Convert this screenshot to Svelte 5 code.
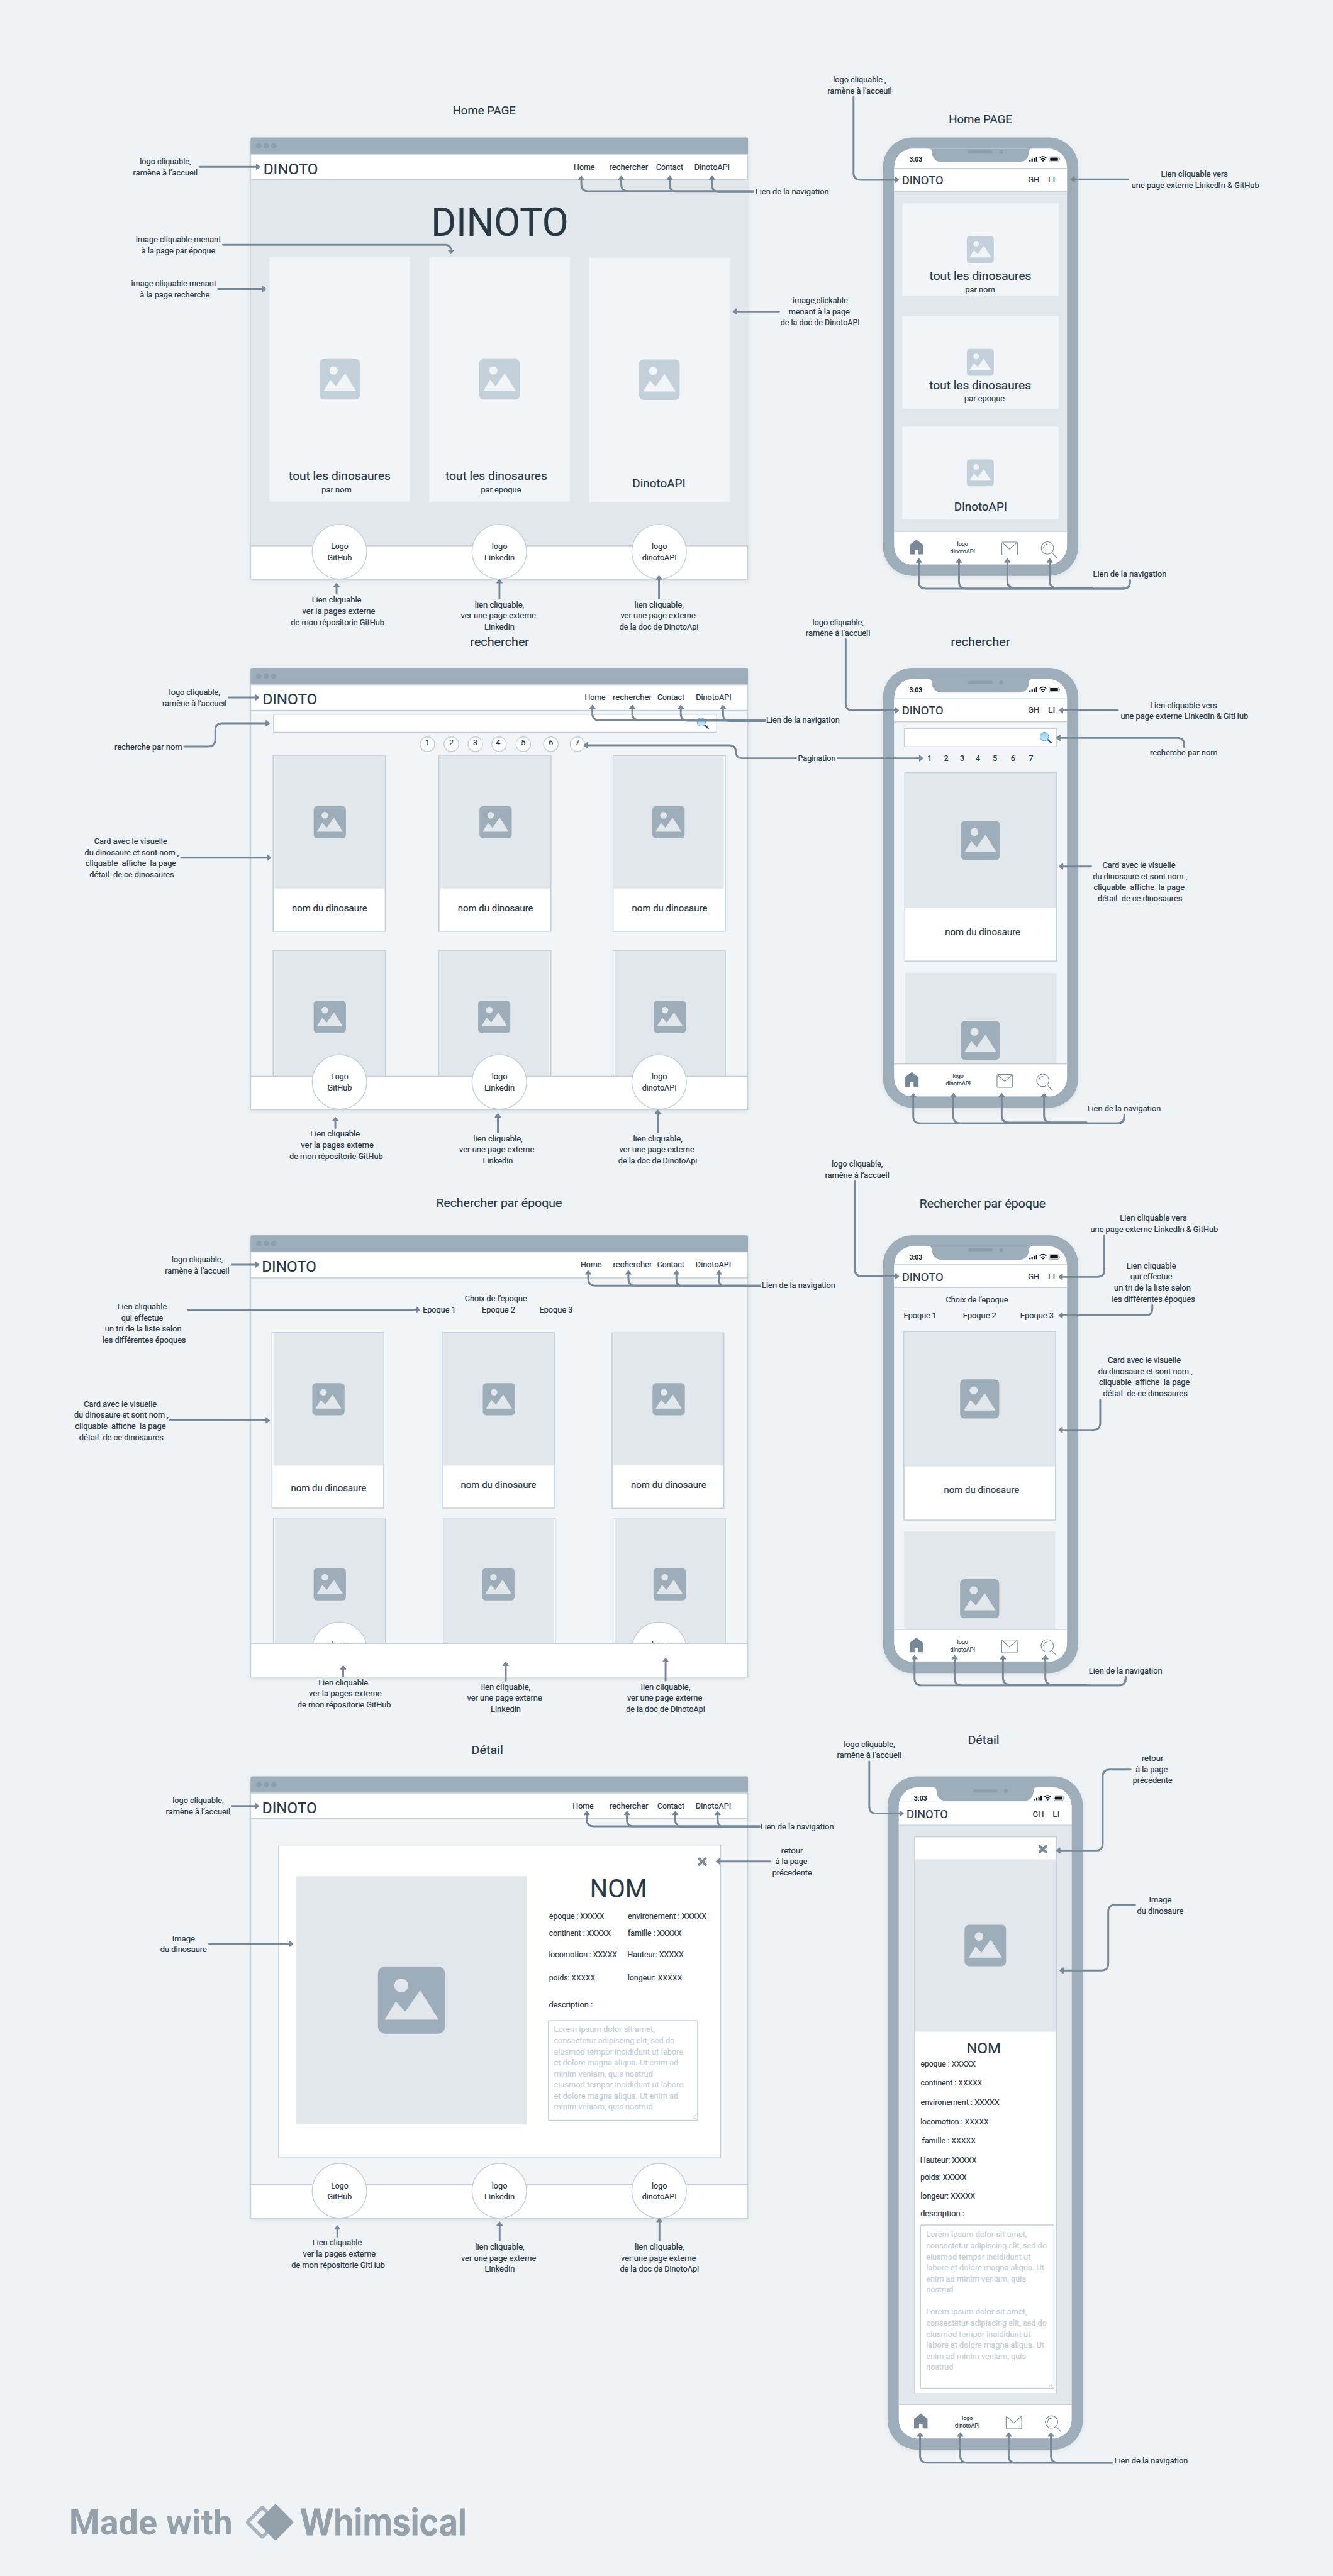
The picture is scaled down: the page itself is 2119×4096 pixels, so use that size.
<script>
  const NB = '\u00a0';

  // Known advance widths of the labels used on the board, in board units.
  const W = {
    'logo cliquable,': 111, 'logo cliquable ,': 115.5, "ramène à l’accueil": 140, "ramène à l’acceuil": 139.5,
    'image cliquable menant': 185, 'à la page par époque': 160.5, 'à la page recherche': 151.5,
    'image,clickable': 120, 'menant à la page': 132.5, 'de la doc de DinotoAPI': 172,
    'Lien cliquable vers': 145.5, 'une page externe LinkedIn & GitHub': 277,
    'Lien cliquable': 107.5, 'ver la pages externe': 158, 'de mon répositorie GitHub': 203,
    'lien cliquable,': 107, 'ver une page externe': 163, 'Linkedin': 65.5, 'de la doc de DinotoApi': 171.5,
    'Lien de la navigation': 159.5, 'recherche par nom': 147, 'Pagination': 82,
    'Card avec le visuelle': 158.5, 'du dinosaure et sont nom ,': 204.7,
    'qui effectue': 90.7, 'un tri de la liste selon': 166.5, 'les différentes époques': 181,
    'Home': 45.5, 'rechercher': 84.5, 'Contact': 58.5, 'DinotoAPI': 77, 'Logo': 37.5, 'logo': 33.5,
    'GitHub': 53, 'dinotoAPI': 75, 'Choix de l’epoque': 135, 'Epoque 1': 71.5, 'Epoque 2': 72.5, 'Epoque 3': 72.5,
    'par nom': 65, 'par epoque': 87.5, 'GH': 24.5, 'LI': 15.5, 'Image': 49, 'du dinosaure': 101,
    'retour': 47.5, 'à la page': 69.7, 'précedente': 86,
    'epoque : XXXXX': 119.5, 'continent : XXXXX': 134, 'environement : XXXXX': 171, 'locomotion : XXXXX': 148.3,
    'famille : XXXXX': 116.7, 'Hauteur: XXXXX': 122.5, 'poids: XXXXX': 100.3, 'longeur: XXXXX': 118.6, 'description :': 95,
    'Lorem ipsum dolor sit amet,': 219, 'consectetur adipiscing elit, sed do': 262,
    'eiusmod tempor incididunt ut labore': 281, 'et dolore magna aliqua. Ut enim ad': 270,
    'minim veniam, quis nostrud': 215, 'eiusmod tempor incididunt ut': 226.7,
    'labore et dolore magna aliqua. Ut': 256.6, 'enim ad minim veniam, quis': 217, 'nostrud': 59
  };
  const line3 = `cliquable${NB} affiche${NB} la page`;
  const line4 = `détail${NB} de ce dinosaures`;
  W[line3] = 197.3;
  W[line4] = 183.3;

  // Centred notes: x is the centre, y the first baseline, lines 24 apart.
  const card = ['Card avec le visuelle', 'du dinosaure et sont nom ,', line3, line4];
  const cardShift = [-2.3, 0, -2, 0];
  const tri = ['Lien cliquable', 'qui effectue', 'un tri de la liste selon', 'les différentes époques'];
  const triShift = [-4.5, -4.5, -2, 0];
  const logo = ['logo cliquable,', 'ramène à l’accueil'];
  const ext = ['Lien cliquable vers', 'une page externe LinkedIn & GitHub'];
  const gh = ['Lien cliquable', 'ver la pages externe', 'de mon répositorie GitHub'];
  const ghShift = [0, 4.7, 2.2];
  const li = ['lien cliquable,', 'ver une page externe', 'Linkedin'];
  const liShift = [0, -2.5, 0];
  const api = ['lien cliquable,', 'ver une page externe', 'de la doc de DinotoApi'];
  const apiShift = [0, -2, 0];

  const notes = [
    { x: 359, y: 356, l: logo },
    { x: 387.3, y: 525.5, l: ['image cliquable menant', 'à la page par époque'] },
    { x: 377.3, y: 621, l: ['image cliquable menant', 'à la page recherche'], s: [0, 2] },
    { x: 1780.6, y: 658, l: ['image,clickable', 'menant à la page', 'de la doc de DinotoAPI'], s: [0, -2, 0] },
    { x: 1866.3, y: 178.4, l: ['logo cliquable ,', 'ramène à l’acceuil'] },
    { x: 2595.2, y: 383.4, l: ext, s: [-2, 0] },
    { x: 730.7, y: 1308.4, l: gh, s: ghShift },
    { x: 1084.3, y: 1318.5, l: li, s: liShift },
    { x: 1430.7, y: 1318.5, l: api, s: apiShift },
    { x: 2452.8, y: 1252, l: ['Lien de la navigation'] },
    { x: 1819.3, y: 1356.4, l: logo },
    { x: 422.3, y: 1508.6, l: logo },
    { x: 322, y: 1627, l: ['recherche par nom'] },
    { x: 1773.3, y: 1652, l: ['Pagination'] },
    { x: 286, y: 1832.6, l: card, s: cardShift },
    { x: 2571.5, y: 1537, l: ext, s: [-2, 0] },
    { x: 2570, y: 1640, l: ['recherche par nom'] },
    { x: 2475, y: 1884.5, l: card, s: cardShift },
    { x: 727.5, y: 2468, l: gh, s: ghShift },
    { x: 1081, y: 2478, l: li, s: liShift },
    { x: 1428, y: 2478, l: api, s: apiShift },
    { x: 2440.5, y: 2413, l: ['Lien de la navigation'] },
    { x: 428, y: 2740.5, l: logo },
    { x: 313, y: 2843, l: tri, s: triShift },
    { x: 263.4, y: 3054.4, l: card, s: cardShift },
    { x: 745, y: 3659.5, l: gh, s: ghShift },
    { x: 1098, y: 3668.6, l: li, s: liShift },
    { x: 1445, y: 3668.6, l: api, s: apiShift },
    { x: 1861, y: 2533.6, l: logo },
    { x: 2506, y: 2650.8, l: ext, s: [-2, 0] },
    { x: 2504, y: 2754, l: tri, s: triShift },
    { x: 2486.5, y: 2959, l: card, s: cardShift },
    { x: 2443.6, y: 3634, l: ['Lien de la navigation'] },
    { x: 430, y: 3915.2, l: logo },
    { x: 398.5, y: 4215.2, l: ['Image', 'du dinosaure'] },
    { x: 1719.7, y: 4024, l: ['retour', 'à la page', 'précedente'], s: [0, -1.5, 0] },
    { x: 732, y: 4875.8, l: gh, s: ghShift },
    { x: 1085, y: 4885, l: li, s: liShift },
    { x: 1431.6, y: 4885, l: api, s: apiShift },
    { x: 1887.2, y: 3793.2, l: logo },
    { x: 2502.2, y: 3823.7, l: ['retour', 'à la page', 'précedente'], s: [0, -2, 0] },
    { x: 2519, y: 4131, l: ['Image', 'du dinosaure'] },
    { x: 2499.3, y: 5349, l: ['Lien de la navigation'] }
  ];

  // Connectors: each polyline ends in an arrow head.
  const arrows = [
    [[433, 361.8], [565, 361.8]],
    [[484, 531], [979, 531], [979, 551]],
    [[473.5, 627], [578, 627]],
    [[1691, 676], [1591, 676]],
    [[1853, 210], [1853, 390], [1952, 390]],
    [[2448.5, 389], [2324, 389]],
    [[730.7, 1288.5], [730.7, 1265]],
    [[1084.3, 1298.6], [1084.3, 1257]],
    [[1430.7, 1298.6], [1430.7, 1249]],
    [[1836, 1387], [1836, 1542], [1952, 1542]],
    [[496, 1514], [563, 1514]],
    [[400, 1620.6], [467.4, 1620.6], [467.4, 1570], [586, 1570]],
    [[1728.6, 1646], [1597.5, 1646], [1597.5, 1617.8], [1266.5, 1617.8]],
    [[1818, 1646], [2004.5, 1646]],
    [[393, 1862], [589, 1862]],
    [[2427, 1542], [2299, 1542]],
    [[2571, 1622], [2571, 1602], [2293, 1602]],
    [[2369, 1881], [2299, 1881]],
    [[728, 2449], [728, 2425]],
    [[1081, 2458], [1081, 2417]],
    [[1428, 2458], [1428, 2409]],
    [[503, 2746], [563, 2746]],
    [[408, 2843.7], [912, 2843.7]],
    [[369, 3084], [586, 3084]],
    [[745, 3640], [745, 3616]],
    [[1098, 3649], [1098, 3608]],
    [[1445, 3649], [1445, 3599.7]],
    [[1856, 2565], [1856, 2771], [1952, 2771]],
    [[2397.6, 2682], [2397.6, 2772.4], [2298, 2772.4]],
    [[2501.8, 2834], [2501.8, 2855.9], [2298, 2855.9]],
    [[2388.6, 3039], [2388.6, 3104.6], [2298, 3104.6]],
    [[504, 3921.5], [563, 3921.5]],
    [[454, 4220.7], [636.7, 4220.7]],
    [[1672.8, 4041.6], [1554, 4041.6]],
    [[732.4, 4856.4], [732.4, 4832]],
    [[1084.8, 4865], [1084.8, 4823.8]],
    [[1431.7, 4865], [1431.7, 4816]],
    [[1887.2, 3824.7], [1887.2, 3937.5], [1962, 3937.5]],
    [[2454.6, 3842.3], [2394, 3842.3], [2394, 4018], [2293, 4018]],
    [[2464.3, 4136.4], [2406, 4136.4], [2406, 4278.6], [2300, 4278.6]]
  ];

  // The four links of each browser menu join on one line that runs to the note.
  const menus = [
    { xs: [1262, 1348.8, 1454, 1546], tip: 381, end: 1635.5 },
    { xs: [1286, 1372.7, 1478, 1569.7], tip: 1530, end: 1660.5 },
    { xs: [1277, 1364.3, 1468.5, 1560.8], tip: 2758, end: 1650.5 },
    { xs: [1273.9, 1361, 1466, 1558], tip: 3932, end: 1648.5 }
  ];
  const menuDrop = [33.5, 33.5, 34.6, 35.3];
  for (const m of menus) m.xs.forEach((x, i) => arrows.push([[m.end, m.tip + menuDrop[i]], [x, m.tip + menuDrop[i]], [x, m.tip]]));

  // Same for the phones' tab bars, whose line turns up into the note.
  const tabs = [[0, 0], [-12.3, 1161], [-9.5, 2381.7]];
  for (const [dx, dy] of tabs) {
    [1995, 2082].forEach((x) => arrows.push([[2453.3 + dx, 1259.5 + dy], [2453.3 + dx, 1277.8 + dy], [x + dx, 1277.8 + dy], [x + dx, 1212 + dy]]));
    [2187, 2279].forEach((x) => arrows.push([[2371 + dx, 1276.2 + dy], [x + dx, 1276.2 + dy], [x + dx, 1212 + dy]]));
  }
  [1997.5, 2084.8, 2189.8, 2281.7].forEach((x) => arrows.push([[2415, 5347.4], [x, 5347.4], [x, 5281.7]]));

  function shaft(pts) {
    const p = pts.map((q) => [...q]);
    const n = p.length;
    const [ax, ay] = p[n - 2];
    const e = p[n - 1];
    const d = Math.hypot(e[0] - ax, e[1] - ay);
    e[0] -= ((e[0] - ax) / d) * 7;
    e[1] -= ((e[1] - ay) / d) * 7;
    let out = `M${p[0][0]} ${p[0][1]}`;
    for (let i = 1; i < n - 1; i++) {
      const [px, py] = p[i - 1];
      const [cx, cy] = p[i];
      const [nx, ny] = p[i + 1];
      const a = Math.hypot(cx - px, cy - py);
      const b = Math.hypot(nx - cx, ny - cy);
      const r = Math.min(15, i > 1 ? a / 2 : a, i < n - 2 ? b / 2 : b);
      out += `L${cx - ((cx - px) / a) * r} ${cy - ((cy - py) / a) * r}Q${cx} ${cy} ${cx + ((nx - cx) / b) * r} ${cy + ((ny - cy) / b) * r}`;
    }
    return out + `L${e[0]} ${e[1]}`;
  }
  function head(pts) {
    const [ax, ay] = pts[pts.length - 2];
    const [x, y] = pts[pts.length - 1];
    const d = Math.hypot(x - ax, y - ay);
    const ux = (x - ax) / d;
    const uy = (y - ay) / d;
    const bx = x - ux * 8.3;
    const by = y - uy * 8.3;
    return `M${x - ux} ${y - uy}L${bx - uy * 5.8} ${by + ux * 5.8}L${bx + uy * 5.8} ${by - ux * 5.8}Z`;
  }

  const browsers = [
    { y: 298, h: 960, nav: 390, foot: 1184.7, fill: 'grey', title: 'Home PAGE', tx: 1051.3, ty: 248.7, tw: 137, logoX: 574.4, menu: [1246.4, 1323.3, 1425.3, 1508], my: 368, noteX: 1641, noteY: 421.3 },
    { y: 1450, h: 960, nav: 1542, foot: 2336.8, fill: 'pale', title: 'rechercher', tx: 1084.7, ty: 1402.7, tw: 128, logoX: 572.6, menu: [1270, 1331, 1428, 1511.5], my: 1519.6, noteX: 1664.5, noteY: 1569 },
    { y: 2682, h: 960, nav: 2774.5, foot: 3568.4, fill: 'pale', title: 'Rechercher par époque', tx: 1083.5, ty: 2621, tw: 273, logoX: 571, menu: [1261.3, 1331.7, 1427.7, 1511], my: 2752, noteX: 1655, noteY: 2797 },
    { y: 3857, h: 960, nav: 3949, foot: 4743.4, fill: 'pale', title: 'Détail', tx: 1058, ty: 3808.2, tw: 68.5, logoX: 571.7, menu: [1244, 1323.6, 1428, 1511], my: 3926.8, noteX: 1651.8, noteY: 3972 }
  ];
  const menuNames = ['Home', 'rechercher', 'Contact', 'DinotoAPI'];

  const phones = [
    { x: 1917, y: 298, b: 1250, st: 365, nav: 415, foot: 1153.5, fill: 'grey', title: 'Home PAGE', tx: 2128.5, ty: 266.5, tw: 137.5, base: 399, house: [1975, 1171.6], lg: [2089.8, 1185], env: [2174.3, 1176.3], mag: [2274, 1189.5] },
    { x: 1917, y: 1450, b: 2405, st: 1517, nav: 1567, foot: 2310, fill: 'pale', title: 'rechercher', tx: 2128.5, ty: 1402.7, tw: 128, base: 1551, house: [1965, 2327.6], lg: [2080.2, 2341], env: [2163.8, 2332.3], mag: [2264, 2345.5] },
    { x: 1917, y: 2682, b: 3632.6, st: 2746, nav: 2795.5, foot: 3538, fill: 'pale', title: 'Rechercher par époque', tx: 2133.2, ty: 2621.5, tw: 273.5, base: 2781, house: [1974.8, 3555.8], lg: [2089.8, 3569.5], env: [2174, 3560.3], mag: [2273.7, 3573.5] },
    { x: 1927, y: 3857, b: 5319, st: 3912.8, nav: 3963, foot: 5221, fill: 'grey', title: 'Détail', tx: 2135.3, ty: 3787, tw: 68.5, base: 3948, house: [1984.5, 5241], lg: [2100, 5255.4], env: [2183.5, 5245.5], mag: [2283, 5259] }
  ];

  const homeCards = [
    { x: 585, y: 558, w: 305, h: 531, ix: 693.7, iy: 779, s: 88 },
    { x: 932, y: 558, w: 305, h: 531, ix: 1040.5, iy: 779, s: 88 },
    { x: 1279, y: 559, w: 305, h: 531, ix: 1387.5, iy: 780, s: 88 },
    { x: 1959, y: 441, w: 339, h: 201, ix: 2099, iy: 512, s: 58.5 },
    { x: 1959, y: 686, w: 339, h: 201, ix: 2099, iy: 757, s: 58.5 },
    { x: 1959, y: 926, w: 339, h: 201, ix: 2099, iy: 997, s: 58.5 }
  ];
  const homeText = [
    ['tout les dinosaures', 737.5, 1042, 221], ['tout les dinosaures', 1077.5, 1042, 221], ['DinotoAPI', 1430.5, 1058.6, 115],
    ['tout les dinosaures', 2128.5, 607, 221], ['tout les dinosaures', 2128, 844.2, 221], ['DinotoAPI', 2129, 1108, 115]
  ];
  const homeSub = [['par nom', 730.8, 1069.4], ['par epoque', 1087.7, 1069.4], ['par nom', 2127.8, 634], ['par epoque', 2137.5, 871.5]];

  // Cards: frame x/right/top/bottom, picture left/right/bottom, icon x/y/size, name centre and baseline.
  const dinoCards = [
    { x: 593, r: 836.5, y: 1640, b: 2022, l: 596, pr: 836.5, pb: 1929, ix: 681, iy: 1750, s: 70, n: 715.5, ny: 1979 },
    { x: 953, r: 1196, y: 1640, b: 2022, l: 956, pr: 1196, pb: 1929, ix: 1041, iy: 1750, s: 70, n: 1075.7, ny: 1979 },
    { x: 1331, r: 1574.5, y: 1640.5, b: 2022, l: 1331, pr: 1571.5, pb: 1929, ix: 1416.3, iy: 1750, s: 70, n: 1453.8, ny: 1979 },
    { x: 593, r: 836.5, y: 2063.5, b: 2336, l: 596, pr: 836.5, pb: 2336, ix: 681, iy: 2173, s: 70 },
    { x: 953, r: 1196, y: 2063.5, b: 2336, l: 953, pr: 1193, pb: 2336, ix: 1038, iy: 2173, s: 70 },
    { x: 1331, r: 1574.5, y: 2063.5, b: 2336, l: 1334, pr: 1574.5, pb: 2336, ix: 1419.3, iy: 2173, s: 70 },
    { x: 1964.5, r: 2294, y: 1678, b: 2086.5, l: 1964.5, pr: 2294, pb: 1971, ix: 2086, iy: 1782, s: 85, n: 2133.5, ny: 2030 },
    { x: 1965.5, r: 2294, y: 2112, b: 2310, l: 1965.5, pr: 2294, pb: 2310, ix: 2086, iy: 2216, s: 85, bare: true },
    { x: 590.5, r: 833, y: 2893.5, b: 3274.5, l: 593.5, pr: 833, pb: 3182.4, ix: 678, iy: 3003, s: 70, n: 713.4, ny: 3238 },
    { x: 960, r: 1203, y: 2893.5, b: 3274.5, l: 963.3, pr: 1203, pb: 3182.4, ix: 1048.3, iy: 3003, s: 70, n: 1082.3, ny: 3231 },
    { x: 1329, r: 1571.5, y: 2894, b: 3275, l: 1332, pr: 1571.5, pb: 3182, ix: 1416.8, iy: 3003, s: 70, n: 1451.7, ny: 3231.5 },
    { x: 593.5, r: 836.5, y: 3296, b: 3568, l: 596.5, pr: 836.5, pb: 3568, ix: 681, iy: 3405, s: 70 },
    { x: 962.5, r: 1205.5, y: 3296, b: 3568, l: 962.5, pr: 1202, pb: 3568, ix: 1047, iy: 3405, s: 70 },
    { x: 1331, r: 1574.5, y: 3296, b: 3568, l: 1334.4, pr: 1574.5, pb: 3568, ix: 1418.8, iy: 3405, s: 70 },
    { x: 1962.5, r: 2291.5, y: 2891, b: 3300.5, l: 1962.5, pr: 2291.5, pb: 3184, ix: 2084.3, iy: 2995, s: 85, n: 2131, ny: 3242 },
    { x: 1963, r: 2291, y: 3325, b: 3538, l: 1963, pr: 2291, pb: 3538, ix: 2084.3, iy: 3429, s: 85, bare: true }
  ];

  const pages = [[928, 928], [980, 980], [1032, 1032], [1083.5, 1081.5], [1136, 1136], [1196, 1196], [1253.5, 1253.5]];
  const phonePages = [2018.3, 2054, 2088.8, 2123, 2160, 2199.3, 2238.6];

  const discs = [[737, 'Logo', 'GitHub'], [1084, 'logo', 'Linkedin'], [1431, 'logo', 'dinotoAPI']];
  const discRows = [1197.5, 2349, 4757];

  const facts = [
    ['epoque : XXXXX', 1192.3, 4167], ['environement : XXXXX', 1363, 4167],
    ['continent : XXXXX', 1192, 4203.8], ['famille : XXXXX', 1363, 4203.8],
    ['locomotion : XXXXX', 1191.5, 4249.8], ['Hauteur: XXXXX', 1362, 4249.8],
    ['poids: XXXXX', 1192, 4300.2], ['longeur: XXXXX', 1362.5, 4300.2], ['description :', 1191.5, 4359],
    ['epoque : XXXXX', 1998.6, 4486.8], ['continent : XXXXX', 1998.6, 4528.7], ['environement : XXXXX', 1998.6, 4570.6],
    ['locomotion : XXXXX', 1998.3, 4612.8], ['famille : XXXXX', 2001.6, 4654.5], ['Hauteur: XXXXX', 1997.8, 4696.6],
    ['poids: XXXXX', 1998.3, 4733.6], ['longeur: XXXXX', 1998.5, 4774], ['description :', 1998.3, 4812]
  ];
  const wideText = [
    'Lorem ipsum dolor sit amet,', 'consectetur adipiscing elit, sed do', 'eiusmod tempor incididunt ut labore',
    'et dolore magna aliqua. Ut enim ad', 'minim veniam, quis nostrud', 'eiusmod tempor incididunt ut labore',
    'et dolore magna aliqua. Ut enim ad', 'minim veniam, quis nostrud'
  ];
  const para = [
    'Lorem ipsum dolor sit amet,', 'consectetur adipiscing elit, sed do', 'eiusmod tempor incididunt ut',
    'labore et dolore magna aliqua. Ut', 'enim ad minim veniam, quis', 'nostrud'
  ];
  const narrowText = [...para, '', ...para];
</script>

{#snippet mid(text, x, y, w = W[text], kind = 'note')}
  <text class={kind} {x} {y} text-anchor="middle" textLength={w} lengthAdjust="spacingAndGlyphs">{text}</text>
{/snippet}

{#snippet left(text, x, y, w = W[text], kind = 'note')}
  <text class={kind} {x} {y} textLength={w} lengthAdjust="spacingAndGlyphs">{text}</text>
{/snippet}

{#snippet picture(x, y, s, tone)}
  <g class={tone} transform="translate({x} {y}) scale({s / 100})">
    <rect class="plate" width="100" height="100" rx="11" />
    <circle class="hole" cx="34.7" cy="28.3" r="10.3" />
    <path class="hole ridge" d="M11.5 78.3L26.8 53.8L40.6 68.8L62.9 37.4L88.7 78.3Z" />
  </g>
{/snippet}

{#snippet lens(x, y)}
  <g transform="translate({x} {y})">
    <path class="lens-grip" d="M18 17.5L25 24" />
    <circle class="lens-ring" cx="10" cy="10.5" r="9.2" />
  </g>
{/snippet}

{#snippet cross(x, y)}
  <path class="cross" d="M{x - 7} {y - 6.5}L{x + 7} {y + 6.5}M{x + 7} {y - 6.5}L{x - 7} {y + 6.5}" />
{/snippet}

{#snippet disc(x, cy, a, b)}
  <circle class="box" cx={x} {cy} r="59.3" />
  {@render mid(a, x + 0.5, cy - 5.3)}
  {@render mid(b, x + 0.5, cy + 18.4)}
{/snippet}

<svg class="board" viewBox="0 0 2894 5593" xmlns="http://www.w3.org/2000/svg">
  <defs>
    <linearGradient id="glass" x1="0" y1="0" x2="0" y2="1">
      <stop offset="0" stop-color="#8fd0f5" />
      <stop offset="1" stop-color="#c9ecfd" />
    </linearGradient>
    <clipPath id="aboveFooter"><rect x="544" y="3400" width="1080" height="168.4" /></clipPath>
  </defs>

  {#each browsers as b}
    {@render mid(b.title, b.tx, b.ty, b.tw, 'title')}
    <g>
      <rect class="frame" x="544" y={b.y} width="1080" height={b.h} rx="3" />
      <rect class={b.fill} x="544" y={b.y + 36} width="1080" height={b.h - 36} />
      {#if b.fill === 'pale'}<rect class="outline" x="544.5" y={b.y + 36} width="1079" height={b.h - 36.5} />{/if}
      {#each [562, 578.2, 594.3] as cx}<circle class="dot" {cx} cy={b.y + 18} r="6" />{/each}
      <rect class="bar" x="544.6" y={b.y + 36.5} width="1078.8" height={b.nav - b.y - 36.5} />
      <path class="edge" d="M544 {b.nav}H1624" />
    </g>
    {@render left('DINOTO', b.logoX - 2.5, b.y + 79.6, 118.5, 'logo')}
    {#each menuNames as name, i}{@render left(name, b.menu[i] - 0.7, b.my)}{/each}
    {@render left('Lien de la navigation', b.noteX - 1, b.noteY)}
  {/each}

  {#each phones as p}
    {@render mid(p.title, p.tx, p.ty, p.tw, 'title')}
    <rect class="frame" x={p.x} y={p.y} width="424" height={p.b - p.y} rx="64" />
    <clipPath id="screen{p.y}"><rect x={p.x + 24.4} y={p.y + 24} width="375" height={p.b - p.y - 48.5} rx="40" /></clipPath>
    <g clip-path="url(#screen{p.y})">
      <rect class="white" x={p.x} y={p.y} width="424" height={p.b - p.y} />
      <path class="notch" transform="translate({p.x} {p.y})" d="M98 20V24Q106 24 106 31Q107 53.5 130 53.5H294Q316 53.5 317 31Q317 24 325 24V20Z" />
      <g transform="translate({p.x} {p.y})">
        <text class="clock" x="57.2" y="53" textLength="28.5" lengthAdjust="spacingAndGlyphs">3:03</text>
        <path class="ink" d="M317.5 48.5h3v3.5h-3zM322.3 46.8h3v5.2h-3zM327.1 44.4h3v7.6h-3zM331.9 42h3v10h-3z" />
        <path class="wave" d="M340.2 44.6Q347.4 38.6 354.6 44.6M343.2 48Q347.4 44.8 351.6 48" />
        <circle class="ink" cx="347.4" cy="50.4" r="1.8" />
        <rect class="cell" x="361" y="41.8" width="20.6" height="10.6" rx="2.6" />
        <rect class="ink" x="362.8" y="43.6" width="17" height="7" rx="1" />
        <path class="cell" d="M383.6 45.5V49" />
      </g>
      <rect class={p.fill} x={p.x} y={p.st} width="424" height={p.foot - p.st} />
      <rect class="white" x={p.x} y={p.st} width="424" height={p.nav - p.st} />
    </g>
    <rect class="dot" x={p.x + 185} y={p.y + 28} width="53" height="7" rx="3.5" />
    <circle class="dot" cx={p.x + 257} cy={p.y + 31.5} r="4.5" />
    <path class="edge" d="M{p.x + 24} {p.st}H{p.x + 400}M{p.x + 24} {p.nav}H{p.x + 400}M{p.x + 24} {p.foot}H{p.x + 400}" />
    {@render left('DINOTO', p.x + 41, p.base, 90, 'title')}
    {@render left('GH', p.x + 315, p.base - 3.5)}
    {@render left('LI', p.x + 358.3, p.base - 3.5)}
  {/each}

  <!-- home -->
  {@render mid('DINOTO', 1085, 512, 298, 'hero')}
  {#each homeCards as c}
    <rect class="pale" x={c.x} y={c.y} width={c.w} height={c.h} />
    {@render picture(c.ix, c.iy, c.s, 'soft')}
  {/each}
  {#each homeText as [t, x, y, w]}{@render mid(t, x, y, w, 'title')}{/each}
  {#each homeSub as [t, x, y]}{@render mid(t, x, y)}{/each}

  <!-- search by name -->
  <rect class="field" x="594" y="1550.5" width="962" height="39.5" rx="2.5" />
  {@render lens(1512.5, 1557)}
  {#each pages as [cx, tx], i}
    <circle class="box" {cx} cy="1615.5" r="15.8" />
    {@render mid(String(i + 1), tx, 1617.8, 9.6)}
  {/each}
  <rect class="field" x="1963.3" y="1581.5" width="331" height="39.5" rx="2.5" />
  {@render lens(2257.3, 1588.5)}
  {#each phonePages as x, i}{@render mid(String(i + 1), x, 1652, 9.6)}{/each}

  {#each dinoCards as c}
    {#if !c.bare}<rect class="box" x={c.x} y={c.y} width={c.r - c.x} height={c.b - c.y} />{/if}
    <rect class="grey" x={c.l} y={c.y} width={c.pr - c.l} height={c.pb - c.y} />
    {#if !c.bare}<path class="hair" d="M{c.x} {c.y}H{c.r}V{c.b}M{c.x} {c.y}V{c.b}" />{/if}
    {@render picture(c.ix, c.iy, c.s, 'deep')}
    {#if c.n}{@render mid('nom du dinosaure', c.n, c.ny, 163.5, 'name')}{/if}
  {/each}

  <!-- search by period -->
  {@render mid('Choix de l’epoque', 1076.5, 2825.7)}
  {@render left('Epoque 1', 918, 2849.7)}
  {@render left('Epoque 2', 1046, 2849.7)}
  {@render left('Epoque 3', 1171, 2849.7)}
  {@render mid('Choix de l’epoque', 2121, 2827.5)}
  {@render left('Epoque 1', 1962, 2862.7)}
  {@render left('Epoque 2', 2090.5, 2862.7)}
  {@render left('Epoque 3', 2215, 2862.7)}

  <!-- detail -->
  <rect class="box" x="605" y="4006" width="959.5" height="679.5" />
  <rect class="grey" x="643.5" y="4073.8" width="500.3" height="539.5" />
  {@render picture(820.5, 4269.8, 146, 'deep')}
  {@render cross(1524.7, 4042.4)}
  {@render mid('NOM', 1342.8, 4120.4, 124, 'name-xl')}
  <rect class="box" x="1985.8" y="3988.3" width="307.5" height="1209.5" />
  <rect class="grey" x="1986.3" y="4037" width="306.5" height="374.5" />
  {@render picture(2094.2, 4179.3, 90, 'deep')}
  {@render cross(2264, 4015)}
  {@render mid('NOM', 2135.6, 4458.5, 74.5, 'logo')}
  {#each facts as [t, x, y]}{@render left(t, x, y)}{/each}
  <rect class="field" x="1190.5" y="4387.5" width="324" height="216.5" rx="2.5" />
  {#each wideText as t, i}{@render left(t, 1202.5, 4412.8 + i * 24, W[t], 'filler')}{/each}
  <rect class="field" x="1998.3" y="4831.5" width="290" height="354.5" rx="2.5" />
  {#each narrowText as t, i}
    {#if t}{@render left(t, 2010.6, 4858 + i * 24, W[t], 'filler')}{/if}
  {/each}
  <path class="grip" d="M1504 4600.5L1511 4592M1508 4600.5L1511 4597M2277 5183L2285 5175M2281.5 5183L2285 5179.5" />

  <!-- page footers -->
  {#each browsers as b}
    <rect class="bar" x="544.6" y={b.foot} width="1078.8" height={b.y + b.h - b.foot - 0.6} />
    <path class="edge" d="M544 {b.foot}H1624" />
  {/each}
  {#each discRows as cy}
    {#each discs as [x, a, b]}{@render disc(x, cy, a, b)}{/each}
  {/each}
  <g clip-path="url(#aboveFooter)">
    {@render disc(737, 3581.3, 'Logo', 'GitHub')}
    {@render disc(1431, 3581.3, 'logo', 'dinotoAPI')}
  </g>
  <path class="edge" d="M544 3568.4H1624" />

  {#each phones as p}
    <path class="white" d="M{p.x + 24.4} {p.foot}V{p.b - 64.5}A40 40 0 0 0 {p.x + 64.4} {p.b - 24.5}H{p.x + 359.4}A40 40 0 0 0 {p.x + 399.4} {p.b - 64.5}V{p.foot}Z" />
    <path class="edge" d="M{p.x + 24} {p.foot}H{p.x + 400}" />
    <path class="edge thin" d="M{p.x + 60} {p.b - 24.5}H{p.x + 364}" />
    <path class="house" transform="translate({p.house[0]} {p.house[1]})" d="M14.6 0.8L28.5 11.5V31.2H19.2V21.5H10V31.2H0.7V11.5Z" />
    {@render mid('logo', p.lg[0], p.lg[1], 23.6, 'mini')}
    {@render mid('dinotoAPI', p.lg[0] + 0.2, p.lg[1] + 16, 53.8, 'mini')}
    <g class="line" transform="translate({p.env[0]} {p.env[1]})">
      <rect x="0.8" y="0.5" width="33.8" height="28" rx="2.5" />
      <path d="M2.5 2L17.6 15.8L33 2" />
    </g>
    <g class="line" transform="translate({p.mag[0]} {p.mag[1]})">
      <circle r="13.5" />
      <path d="M-8.5 0A8.5 8.5 0 0 1 0 -8.5M11.5 12L19.8 20.5" />
    </g>
  {/each}

  {#each notes as n}
    {#each n.l as t, i}{@render mid(t, n.x + (n.s ? n.s[i] : 0), n.y + i * 24)}{/each}
  {/each}

  {#each arrows as a}
    <path class="wire" d={shaft(a)} />
    <path class="tip" d={head(a)} />
  {/each}

  <g>
    {@render left('Made with', 150, 5503.7, 355, 'made')}
    <rect class="gem-line" x="-23" y="-23" width="46" height="46" rx="2" transform="translate(569.2 5476.7) rotate(45)" />
    <rect class="gem" x="-28.5" y="-28.5" width="57" height="57" rx="4" transform="translate(597.9 5476.7) rotate(45)" />
    {@render left('Whimsical', 651, 5505, 362, 'brand')}
  </g>
</svg>

<style>
  :global(body) {
    margin: 0;
    background: #eff3f6;
  }
  .board {
    display: block;
    width: 2119px;
    height: 4096px;
    background: #eff3f6;
    font-family: Roboto, 'Noto Sans', 'Liberation Sans', sans-serif;
  }
  text {
    fill: #293845;
    stroke: #293845;
    stroke-width: 0.3;
  }
  .note { font-size: 18px; }
  .mini { font-size: 13px; }
  .name { font-size: 21px; }
  .title { font-size: 26px; }
  .logo { font-size: 33.5px; }
  .name-xl { font-size: 56px; }
  .hero { font-size: 85px; }
  .filler { font-size: 18px; fill: #c3cfd9; stroke: #c3cfd9; }
  .clock { font-size: 15.5px; font-weight: 600; fill: #0d151d; stroke: none; }
  .made { font-size: 77px; font-weight: 700; fill: #95a1aa; stroke: none; }
  .brand {
    font-family: Inter, Roboto, sans-serif;
    font-size: 79px;
    font-weight: 600;
    fill: #95a1aa;
    stroke: #95a1aa;
    stroke-width: 1.5;
    stroke-linejoin: round;
  }
  .frame { fill: #9eadba; filter: drop-shadow(0 3px 5px rgba(41, 56, 69, 0.1)); }
  .dot { fill: #8f9eac; }
  .notch { fill: #9eadba; }
  .grey { fill: #e2e7eb; }
  .pale { fill: #f1f5f8; }
  .white { fill: #fff; }
  .outline { fill: none; stroke: #c3cfd9; stroke-width: 1.5; }
  .bar { fill: #fff; stroke: #c3cfd9; stroke-width: 1.2; }
  .box { fill: #fff; stroke: #c3cfd9; stroke-width: 2; }
  .field { fill: #fff; stroke: #c3cfd9; stroke-width: 2; }
  .hair { fill: none; stroke: #c3cfd9; stroke-width: 1.2; }
  .edge { fill: none; stroke: #c3cfd9; stroke-width: 2; }
  .thin { stroke-width: 1.4; }
  .soft .plate { fill: #c3cfd9; }
  .soft .hole { fill: #f1f5f8; stroke: #f1f5f8; }
  .deep .plate { fill: #9eadba; }
  .deep .hole { fill: #e2e7eb; stroke: #e2e7eb; }
  .hole { stroke-width: 0; }
  .ridge { stroke-width: 2; stroke-linejoin: round; }
  .wire {
    fill: none;
    stroke: #788896;
    stroke-width: 4;
    stroke-linecap: round;
  }
  .tip { fill: #788896; stroke: #788896; stroke-width: 2; stroke-linejoin: round; }
  .house { fill: #788896; stroke: #788896; stroke-width: 1.4; stroke-linejoin: round; }
  .line { fill: none; stroke: #788896; stroke-width: 1.5; stroke-linecap: round; stroke-linejoin: round; }
  .cross { stroke: #788896; stroke-width: 5.4; stroke-linecap: round; }
  .grip { stroke: #9eadba; stroke-width: 1; }
  .ink { fill: #0d151d; }
  .wave { fill: none; stroke: #0d151d; stroke-width: 2; }
  .cell { fill: none; stroke: #9a9fa3; stroke-width: 1.2; }
  .lens-ring { fill: url(#glass); stroke: #5d9cc4; stroke-width: 1.2; }
  .lens-grip { stroke: #1d4f75; stroke-width: 3.2; stroke-linecap: round; }
  .gem { fill: #95a1aa; }
  .gem-line { fill: none; stroke: #a9b3bb; stroke-width: 7.6; }
</style>
